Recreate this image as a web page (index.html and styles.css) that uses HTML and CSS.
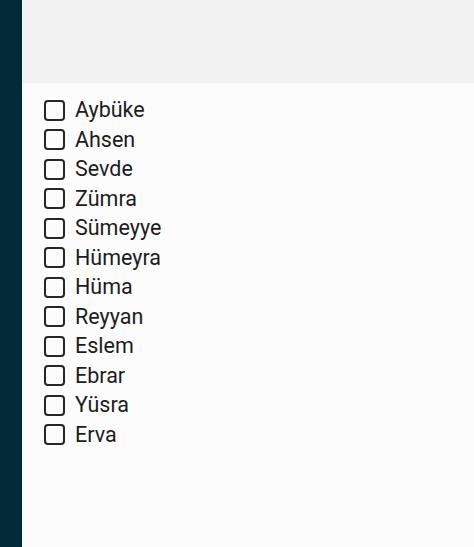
FILE: index.html
```html
<!DOCTYPE html>
<html>
<head>
<meta charset="utf-8">
<link rel="stylesheet" href="styles.css">
</head>
<body>
<div class="app">
  <aside class="sidebar"></aside>
  <main class="main">
    <header class="topbar"></header>
    <ul class="list">
      <li class="item"><span class="box"></span><span class="label">Aybüke</span></li>
      <li class="item"><span class="box"></span><span class="label">Ahsen</span></li>
      <li class="item"><span class="box"></span><span class="label">Sevde</span></li>
      <li class="item"><span class="box"></span><span class="label">Zümra</span></li>
      <li class="item"><span class="box"></span><span class="label">Sümeyye</span></li>
      <li class="item"><span class="box"></span><span class="label">Hümeyra</span></li>
      <li class="item"><span class="box"></span><span class="label">Hüma</span></li>
      <li class="item"><span class="box"></span><span class="label">Reyyan</span></li>
      <li class="item"><span class="box"></span><span class="label">Eslem</span></li>
      <li class="item"><span class="box"></span><span class="label">Ebrar</span></li>
      <li class="item"><span class="box"></span><span class="label">Yüsra</span></li>
      <li class="item"><span class="box"></span><span class="label">Erva</span></li>
    </ul>
  </main>
</div>
</body>
</html>
```
FILE: styles.css
```css
html, body {
  margin: 0;
  padding: 0;
  height: 100%;
}
body {
  font-family: Roboto, "Noto Sans", sans-serif;
  background: #fcfcfc;
  color: #1c1c1c;
}
.app {
  display: flex;
  height: 547px;
}
.sidebar {
  width: 22px;
  flex: none;
  background: #032a38;
}
.main {
  flex: 1;
  display: flex;
  flex-direction: column;
  background: #fcfcfc;
}
.topbar {
  height: 83px;
  background: #f2f2f2;
}
.list {
  list-style: none;
  margin: 0;
  padding: 17px 0 0 22px;
  display: flex;
  flex-direction: column;
  gap: 9.5px;
}
.item {
  display: flex;
  align-items: center;
  gap: 10px;
  height: 20px;
}
.box {
  width: 17px;
  height: 17px;
  border: 2px solid #262626;
  border-radius: 4px;
  flex: none;
}
.label {
  font-size: 21.5px;
  line-height: 20px;
  color: #1c1c1c;
}
```
